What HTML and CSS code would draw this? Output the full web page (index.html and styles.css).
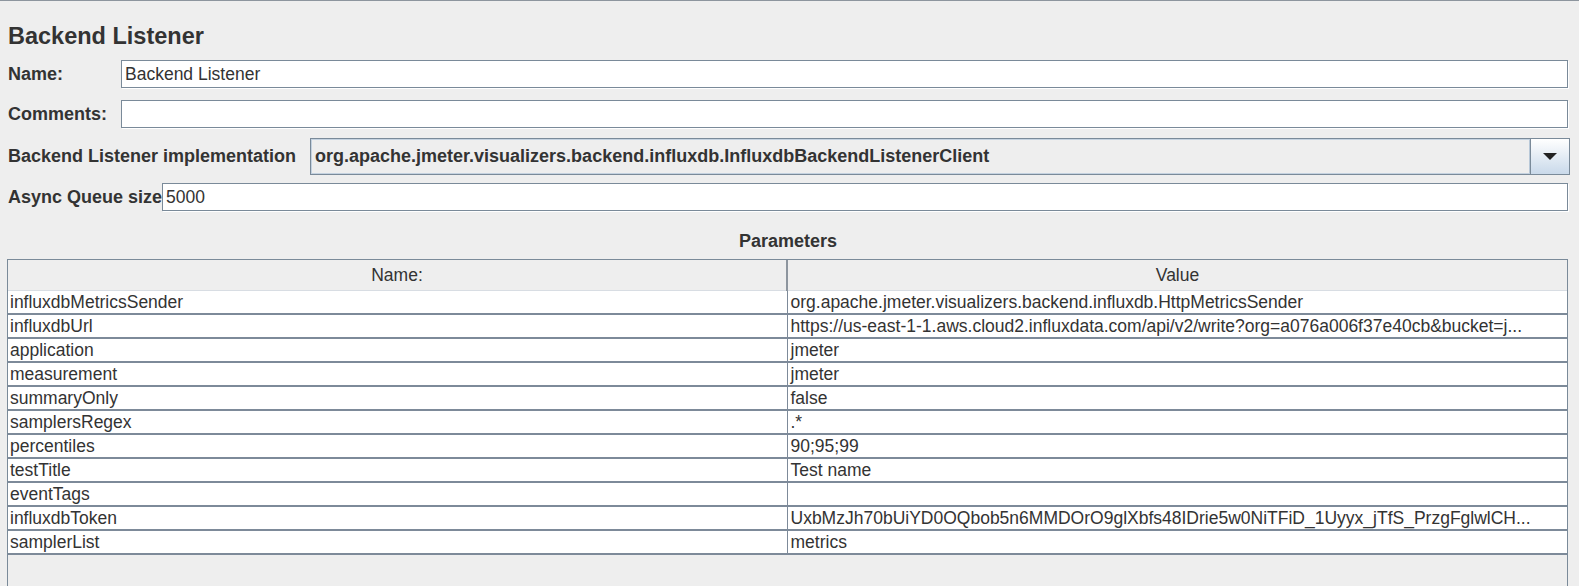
FILE: index.html
```html
<!DOCTYPE html>
<html>
<head>
<meta charset="utf-8">
<link rel="stylesheet" href="styles.css">
</head>
<body>
<div class="panel">
  <div class="title">Backend Listener</div>
  <div class="row row-name"><span class="lbl lbl-w">Name:</span><div class="field">Backend Listener</div></div>
  <div class="row row-comments"><span class="lbl lbl-w">Comments:</span><div class="field"></div></div>
  <div class="row row-combo"><span class="lbl lbl-impl">Backend Listener implementation</span>
    <div class="combo"><div class="combo-text">org.apache.jmeter.visualizers.backend.influxdb.InfluxdbBackendListenerClient</div>
      <div class="combo-btn"><svg width="14" height="8" viewBox="0 0 14 8"><path d="M0 0H14L7 7Z" fill="#222"/></svg></div>
    </div>
  </div>
  <div class="row row-async"><span class="lbl">Async Queue size</span><div class="field">5000</div></div>
  <div class="params-title">Parameters</div>
  <div class="table-wrap">
    <table class="params">
      <thead><tr><th class="c1">Name:</th><th class="c2">Value</th></tr></thead>
      <tbody>
        <tr><td class="c1">influxdbMetricsSender</td><td class="c2">org.apache.jmeter.visualizers.backend.influxdb.HttpMetricsSender</td></tr>
        <tr><td class="c1">influxdbUrl</td><td class="c2">https://us-east-1-1.aws.cloud2.influxdata.com/api/v2/write?org=a076a006f37e40cb&amp;bucket=j...</td></tr>
        <tr><td class="c1">application</td><td class="c2">jmeter</td></tr>
        <tr><td class="c1">measurement</td><td class="c2">jmeter</td></tr>
        <tr><td class="c1">summaryOnly</td><td class="c2">false</td></tr>
        <tr><td class="c1">samplersRegex</td><td class="c2">.*</td></tr>
        <tr><td class="c1">percentiles</td><td class="c2">90;95;99</td></tr>
        <tr><td class="c1">testTitle</td><td class="c2">Test name</td></tr>
        <tr><td class="c1">eventTags</td><td class="c2"></td></tr>
        <tr><td class="c1">influxdbToken</td><td class="c2">UxbMzJh70bUiYD0OQbob5n6MMDOrO9glXbfs48IDrie5w0NiTFiD_1Uyyx_jTfS_PrzgFglwlCH...</td></tr>
        <tr><td class="c1">samplerList</td><td class="c2">metrics</td></tr>
      </tbody>
    </table>
  </div>
</div>
</body>
</html>
```

FILE: styles.css
```css
html, body {
  margin: 0;
  padding: 0;
  background: #eeeeee;
}
body {
  font-family: "Liberation Sans", Arial, sans-serif;
  color: #333333;
  overflow: hidden;
}
.panel {
  border-top: 1px solid #8d959e;
  height: 585px;
  padding: 0 11px 0 8px;
  display: flex;
  flex-direction: column;
}
.title {
  font-size: 23.5px;
  font-weight: bold;
  line-height: 28px;
  height: 28px;
  margin-top: 21px;
}
.row {
  display: flex;
  align-items: center;
}
.lbl {
  font-size: 18px;
  font-weight: bold;
  white-space: nowrap;
}
.lbl-w {
  width: 113px;
  flex: none;
}
.lbl-impl {
  width: 302px;
  flex: none;
}
.field {
  flex: 1;
  height: 26px;
  line-height: 26px;
  background: #ffffff;
  border: 1px solid #7a8a99;
  box-shadow: 1px 1px 0 #ffffff;
  font-size: 17.5px;
  padding-left: 3px;
  white-space: nowrap;
}
.row-name { margin-top: 10px; }
.row-comments { margin-top: 12px; }
.row-combo { margin-top: 10px; }
.row-async { margin-top: 8px; }
.combo {
  flex: 1;
  height: 35px;
  margin-right: -2px;
  display: flex;
  border: 1px solid #7a8a99;
  background: #eeeeee;
}
.combo-text {
  flex: 1;
  border: 1px solid #c4d2e0;
  border-right-color: #b8c8d8;
  font-size: 18px;
  font-weight: bold;
  line-height: 33px;
  padding-left: 3px;
  white-space: nowrap;
}
.combo-btn {
  width: 38px;
  border-left: 1px solid #7a8a99;
  background: linear-gradient(#ffffff, #c9d9ea);
  display: flex;
  align-items: center;
  justify-content: center;
}
.params-title {
  margin-top: 20px;
  text-align: center;
  font-size: 18px;
  font-weight: bold;
  line-height: 20px;
  height: 20px;
}
.table-wrap {
  margin-top: 8px;
  margin-left: -1px;
  flex: 1;
  border: 1px solid #7a8a99;
  border-bottom: none;
}
.params {
  width: 100%;
  border-collapse: collapse;
  table-layout: fixed;
  font-size: 17.5px;
}
.params .c1 { width: 778px; }
.params th {
  height: 30px;
  font-weight: normal;
  background: #eeeeee;
  text-align: center;
  padding: 0;
  border-bottom: 1px solid #d8dde3;
}
.params th.c2 {
  border-left: 2px solid #8d959e;
}
.params td {
  height: 22px;
  padding: 0 0 0 2px;
  background: #ffffff;
  border-bottom: 2px solid #7d8a99;
  white-space: nowrap;
  overflow: hidden;
  line-height: 22px;
}
.params td.c2 {
  border-left: 1px solid #7d8a99;
  padding-left: 3px;
}
```
